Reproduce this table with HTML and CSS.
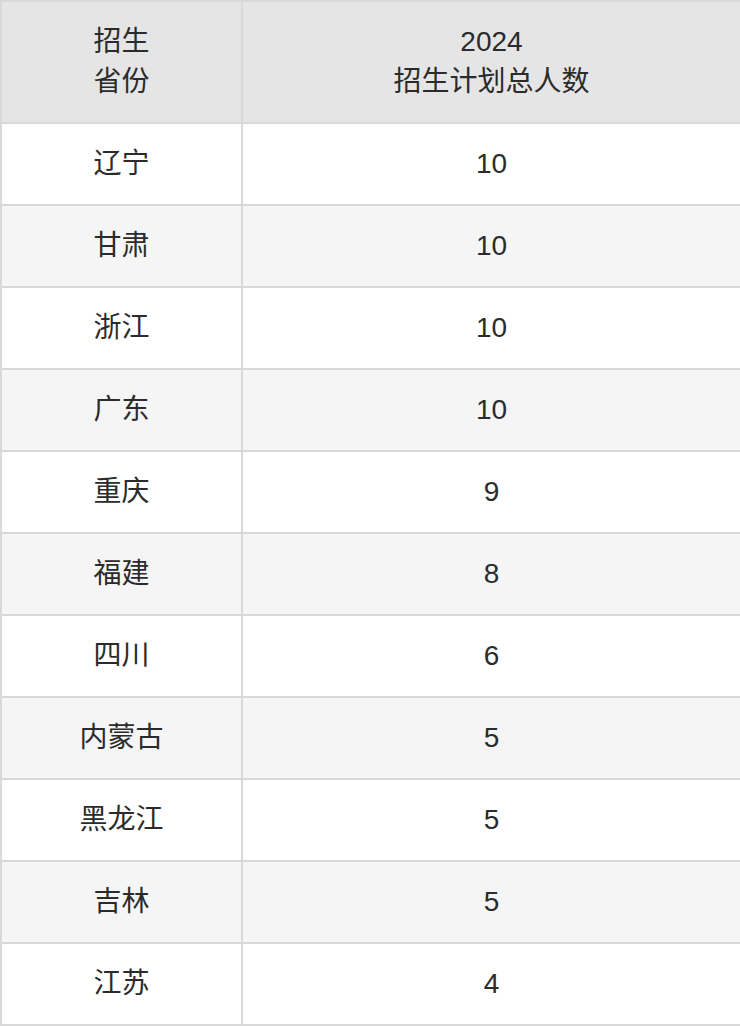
FILE: index.html
```html
<!DOCTYPE html>
<html lang="zh">
<head>
<meta charset="utf-8">
<link rel="stylesheet" href="styles.css">
</head>
<body>
<table class="plan">
  <colgroup><col class="c1"><col class="c2"></colgroup>
  <thead>
    <tr><th>招生<br>省份</th><th>2024<br>招生计划总人数</th></tr>
  </thead>
  <tbody>
    <tr><td>辽宁</td><td>10</td></tr>
    <tr><td>甘肃</td><td>10</td></tr>
    <tr><td>浙江</td><td>10</td></tr>
    <tr><td>广东</td><td>10</td></tr>
    <tr><td>重庆</td><td>9</td></tr>
    <tr><td>福建</td><td>8</td></tr>
    <tr><td>四川</td><td>6</td></tr>
    <tr><td>内蒙古</td><td>5</td></tr>
    <tr><td>黑龙江</td><td>5</td></tr>
    <tr><td>吉林</td><td>5</td></tr>
    <tr><td>江苏</td><td>4</td></tr>
  </tbody>
</table>
</body>
</html>
```
FILE: styles.css
```css
html, body {
  margin: 0;
  padding: 0;
  background: #ffffff;
}
.plan {
  width: 740px;
  border-collapse: collapse;
  table-layout: fixed;
  font-family: "Liberation Sans", "Noto Sans CJK SC", sans-serif;
  font-size: 28px;
  line-height: 40px;
  color: #2b2b2b;
}
.plan .c1 { width: 241px; }
.plan .c2 { width: 499px; }
.plan th, .plan td {
  border: 2px solid #d9d9d9;
  text-align: center;
  vertical-align: middle;
  padding: 0;
  font-weight: normal;
}
.plan th {
  height: 120px;
  background: #e5e5e5;
}
.plan td {
  height: 80px;
}
.plan tbody tr:nth-child(even) td {
  background: #f5f5f5;
}
```
